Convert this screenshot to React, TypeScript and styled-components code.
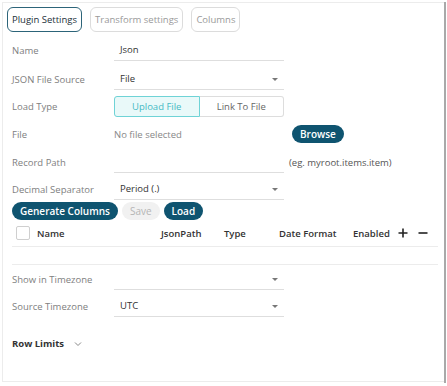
import styled, { createGlobalStyle } from "styled-components";

const TEAL = "#0f5470";

const GlobalStyle = createGlobalStyle`
  body {
    margin: 0;
    background: #fff;
    font-family: "Open Sans", "Liberation Sans", sans-serif;
    font-size: 9.5px;
    color: #333;
  }
`;

const App = () => {
  return (
    <>
      <GlobalStyle />
      <Frame>
        <Panel>
          <Tabs>
            <Tab active>Plugin Settings</Tab>
            <Tab>Transform settings</Tab>
            <Tab>Columns</Tab>
          </Tabs>

          <Row top={7}>
            <Label>Name</Label>
            <Field>Json</Field>
          </Row>
          <Row top={7}>
            <Label>JSON File Source</Label>
            <Field>
              File
              <Caret />
            </Field>
          </Row>
          <Row top={5}>
            <Label>Load Type</Label>
            <Toggle>
              <ToggleOption active>Upload File</ToggleOption>
              <ToggleOption>Link To File</ToggleOption>
            </Toggle>
          </Row>
          <Row top={6}>
            <Label>File</Label>
            <Plain>No file selected</Plain>
            <Pill>Browse</Pill>
          </Row>
          <Row top={6}>
            <Label>Record Path</Label>
            <Field />
            <Hint>(eg. myroot.items.item)</Hint>
          </Row>
          <Row top={5}>
            <Label>Decimal Separator</Label>
            <Field>
              Period (.)
              <Caret />
            </Field>
          </Row>

          <Actions>
            <Pill>Generate Columns</Pill>
            <Pill disabled>Save</Pill>
            <Pill>Load</Pill>
          </Actions>

          <TableHead>
            <Check />
            <Col w={124}>Name</Col>
            <Col w={63}>JsonPath</Col>
            <Col w={55}>Type</Col>
            <Col w={74}>Date Format</Col>
            <Col w={45}>Enabled</Col>
            <Icon>
              <svg width="10" height="10" viewBox="0 0 10 10">
                <path d="M5 0.5v9M0.5 5h9" stroke="#222" strokeWidth="1.6" />
              </svg>
            </Icon>
            <Icon>
              <svg width="10" height="10" viewBox="0 0 10 10">
                <path d="M0.5 5h9" stroke="#222" strokeWidth="1.6" />
              </svg>
            </Icon>
          </TableHead>
          <TableBody />

          <Row top={3}>
            <Label>Show in Timezone</Label>
            <Field>
              <Caret />
            </Field>
          </Row>
          <Row top={5}>
            <Label>Source Timezone</Label>
            <Field>
              UTC
              <Caret />
            </Field>
          </Row>

          <Section>
            Row Limits
            <svg width="8" height="6" viewBox="0 0 8 6">
              <path d="M1 1.5l3 3 3-3" fill="none" stroke="#888" strokeWidth="1" />
            </svg>
          </Section>
        </Panel>
        <Scrollbar />
      </Frame>
    </>
  );
};

const Frame = styled.div`
  display: flex;
  width: 446px;
  height: 384px;
  padding: 2px 0 0 2px;
  box-sizing: border-box;
`;

const Panel = styled.div`
  flex: 1;
  height: 380px;
  border: 1px solid #ececec;
  border-right: none;
  box-sizing: border-box;
  padding: 4px 0 0 9px;
  display: flex;
  flex-direction: column;
`;

const Scrollbar = styled.div`
  width: 3px;
  height: 381px;
  background: #a9a9a9;
`;

const Tabs = styled.div`
  display: flex;
  gap: 8px;
  margin-left: -5px;
`;

const Tab = styled.div<{ active?: boolean }>`
  height: 25px;
  padding: 0 4px;
  display: flex;
  align-items: center;
  border-radius: 6px;
  box-sizing: border-box;
  border: ${(p) => (p.active ? `1.5px solid #2c6479` : "1px solid #dcdcdc")};
  color: ${(p) => (p.active ? "#22313a" : "#9a9a9a")};
`;

const Row = styled.div<{ top: number }>`
  display: grid;
  grid-template-columns: 102px 170px auto;
  align-items: center;
  height: 22px;
  margin-top: ${(p) => p.top}px;
`;

const Label = styled.div`
  color: #808080;
`;

const Field = styled.div`
  height: 21px;
  border-bottom: 1px solid #dedede;
  display: flex;
  align-items: center;
  padding: 0 6px;
  color: #333;
  position: relative;
`;

const Caret = styled.span`
  position: absolute;
  right: 6px;
  top: 10px;
  border-left: 3px solid transparent;
  border-right: 3px solid transparent;
  border-top: 3px solid #777;
`;

const Toggle = styled.div`
  display: flex;
  height: 21px;
`;

const ToggleOption = styled.div<{ active?: boolean }>`
  flex: 1;
  display: flex;
  align-items: center;
  justify-content: center;
  box-sizing: border-box;
  border: 1px solid ${(p) => (p.active ? "#6fd3d6" : "#dddddd")};
  border-radius: ${(p) => (p.active ? "3px 0 0 3px" : "0 3px 3px 0")};
  border-left-width: ${(p) => (p.active ? "1px" : "0")};
  background: ${(p) => (p.active ? "#e9f9f9" : "#fff")};
  color: ${(p) => (p.active ? "#45b9c4" : "#666")};
`;

const Plain = styled.div`
  color: #888;
`;

const Hint = styled.div`
  padding-left: 5px;
  color: #555;
`;

const Pill = styled.div<{ disabled?: boolean }>`
  justify-self: start;
  margin-left: 8px;
  height: 18px;
  padding: 0 8px;
  border-radius: 9px;
  display: inline-flex;
  align-items: center;
  font-size: 10px;
  background: ${(p) => (p.disabled ? "#f1f1f1" : TEAL)};
  color: ${(p) => (p.disabled ? "#b5b5b5" : "#fff")};
  font-weight: ${(p) => (p.disabled ? 400 : 600)};
`;

const Actions = styled.div`
  display: flex;
  gap: 4px;
  margin-top: 2px;

  & > ${Pill} {
    margin-left: 0;
  }
`;

const TableHead = styled.div`
  display: flex;
  align-items: center;
  height: 26px;
  margin-right: 6px;
  padding-left: 4px;
  border-bottom: 1px solid #ececec;
  font-weight: 600;
  color: #333;
`;

const Check = styled.div`
  width: 12px;
  height: 12px;
  border: 1px solid #cfcfcf;
  border-radius: 2px;
  margin-right: 7px;
`;

const Col = styled.div<{ w: number }>`
  width: ${(p) => p.w}px;
`;

const Icon = styled.div`
  width: 20px;
  display: flex;
  align-items: center;
`;

const TableBody = styled.div`
  height: 17px;
  margin-right: 6px;
  border-bottom: 1px solid #ececec;
`;

const Section = styled.div`
  margin-top: 20px;
  display: flex;
  align-items: center;
  gap: 10px;
  font-weight: 700;
  color: #333;
`;

export default App;
